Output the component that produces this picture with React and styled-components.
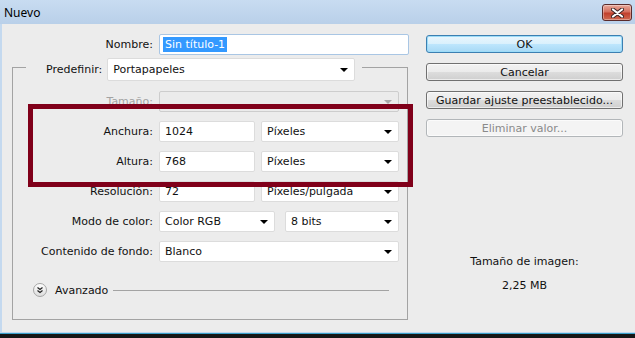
import React from 'react';
import styled, { createGlobalStyle } from 'styled-components';

const GlobalStyle = createGlobalStyle`
  html, body {
    margin: 0;
    padding: 0;
  }
  body {
    width: 635px;
    height: 338px;
    overflow: hidden;
    background: #161616;
    font-family: "DejaVu Sans", sans-serif;
    font-size: 11px;
    color: #111;
  }
`;

// --- Ventana ---

const Window = styled.div`
  position: relative;
  width: 635px;
  height: 333px;
  display: flex;
  flex-direction: column;
  background: #ececec;
`;

const TitleBar = styled.div`
  height: 24px;
  flex-shrink: 0;
  display: flex;
  align-items: center;
  justify-content: space-between;
  padding: 0 3px 0 4px;
  background: linear-gradient(#c8dcf1, #b9d0e9);
`;

const Title = styled.span`
  font-family: "Noto Sans", sans-serif;
  font-size: 12px;
  color: #000;
  margin-top: 1px;
`;

const CloseButton = styled.div`
  width: 30px;
  height: 17px;
  box-sizing: border-box;
  margin-top: 1px;
  display: flex;
  align-items: center;
  justify-content: center;
  border: 1px solid #5a2b2b;
  border-radius: 3px;
  background: linear-gradient(#e9a99b 0%, #d4705f 45%, #c1402d 55%, #cf6a52 100%);
  box-shadow: inset 0 0 0 1px rgba(255, 255, 255, 0.35);
`;

const Body = styled.div`
  flex: 1;
  display: flex;
  border-left: 2px solid #c4d9ef;
  border-bottom: 1px solid #c2d8ee;
`;

const Taskbar = styled.div`
  height: 4px;
  border-top: 1px solid #3aa0c9;
  background: #161616;
`;

// --- Panel izquierdo ---

const LeftPane = styled.div`
  width: 411px;
  box-sizing: border-box;
  padding: 10px 0 0 10px;
`;

const NameRow = styled.div`
  display: flex;
  align-items: center;
  gap: 6px;
  height: 21px;
`;

const Label = styled.span`
  width: ${({ $w }) => $w || 140}px;
  flex-shrink: 0;
  text-align: right;
  white-space: nowrap;
  color: ${({ $disabled }) => ($disabled ? '#a3a3a3' : '#111')};
`;

const TextInput = styled.div`
  width: ${({ $w }) => $w}px;
  height: 21px;
  box-sizing: border-box;
  display: flex;
  align-items: center;
  padding: 0 5px;
  background: #fff;
  border: 1px solid ${({ $focused }) => ($focused ? '#a9c6e4' : '#dcdcdc')};
  border-radius: 2px;
`;

const Selected = styled.span`
  background: #3399ff;
  color: #fff;
  padding: 1px 2px;
  margin-left: -2px;
`;

const GroupBox = styled.fieldset`
  width: 396px;
  box-sizing: border-box;
  margin: 3px 0 0 0;
  padding: 14px 0 22px 0;
  border: 1px solid #a3a3a3;
  border-radius: 0;
`;

const Legend = styled.legend`
  display: flex;
  align-items: flex-start;
  gap: 5px;
  height: 19px;
  margin-left: 13px;
  padding: 0 7px 0 20px;
`;

const LegendLabel = styled.span`
  line-height: 23px;
`;

const Rows = styled.div`
  display: flex;
  flex-direction: column;
  gap: 9px;
`;

const Row = styled.div`
  display: flex;
  align-items: center;
  gap: 6px;
  height: 21px;
`;

const DropBox = styled.div`
  width: ${({ $w }) => $w}px;
  height: ${({ $h }) => $h || 21}px;
  box-sizing: border-box;
  display: flex;
  align-items: center;
  justify-content: space-between;
  padding: 0 5px 0 5px;
  margin-left: ${({ $ml }) => $ml || 0}px;
  border: 1px solid ${({ $disabled }) => ($disabled ? '#cdcdcd' : '#dcdcdc')};
  border-radius: 2px;
  background: ${({ $disabled }) => ($disabled ? '#ebebeb' : '#fff')};
  flex-shrink: 0;
`;

const Arrow = styled.span`
  width: 0;
  height: 0;
  border-left: 4px solid transparent;
  border-right: 4px solid transparent;
  border-top: 4px solid ${({ $disabled }) => ($disabled ? '#a8a8a8' : '#000')};
  margin-right: 1px;
`;

const Dropdown = ({ value, w, h, ml, disabled }) => (
  <DropBox $w={w} $h={h} $ml={ml} $disabled={disabled}>
    <span>{value}</span>
    <Arrow $disabled={disabled} />
  </DropBox>
);

const AdvancedRow = styled.div`
  display: flex;
  align-items: center;
  height: 14px;
  margin: 21px 18px 0 20px;
  gap: 8px;
`;

const Rule = styled.div`
  flex: 1;
  height: 1px;
  margin-left: -3px;
  background: #a3a3a3;
`;

const Highlight = styled.div`
  position: absolute;
  left: 28px;
  top: 104px;
  width: 385px;
  height: 83px;
  box-sizing: border-box;
  border: 5px solid #80001a;
  pointer-events: none;
`;

// --- Panel derecho ---

const RightPane = styled.div`
  width: 197px;
  margin-left: 13px;
  padding-top: 11px;
  display: flex;
  flex-direction: column;
`;

const Buttons = styled.div`
  display: flex;
  flex-direction: column;
  gap: 10px;
`;

const Button = styled.div`
  height: 18px;
  box-sizing: border-box;
  display: flex;
  align-items: center;
  justify-content: center;
  border: 1px solid ${({ $variant }) =>
    $variant === 'default' ? '#3c7fb1' : $variant === 'disabled' ? '#b2b6b9' : '#707070'};
  border-radius: 3px;
  color: ${({ $variant }) => ($variant === 'disabled' ? '#8a8a8a' : '#111')};
  background: ${({ $variant }) =>
    $variant === 'disabled'
      ? '#f4f4f4'
      : $variant === 'default'
      ? 'linear-gradient(#eaf6fd 0%, #d9f0fc 50%, #bee6fd 50%, #a7d9f5 100%)'
      : 'linear-gradient(#f2f2f2 0%, #ebebeb 50%, #dddddd 50%, #cfcfcf 100%)'};
  box-shadow: ${({ $variant }) =>
    $variant === 'default' ? 'inset 0 0 0 1px #9cdcf8' : 'inset 0 0 0 1px rgba(255,255,255,0.6)'};
`;

const SizeInfo = styled.div`
  margin-top: 118px;
  display: flex;
  flex-direction: column;
  align-items: center;
  gap: 10px;
  line-height: 14px;
`;

const CloseGlyph = () => (
  <svg width="13" height="10" viewBox="0 0 13 10">
    <path d="M2 1.5 L11 8.5 M11 1.5 L2 8.5" stroke="#3a2424" strokeWidth="4" strokeLinecap="round" />
    <path d="M2 1.5 L11 8.5 M11 1.5 L2 8.5" stroke="#fff" strokeWidth="2.2" strokeLinecap="round" />
  </svg>
);

const AdvancedIcon = () => (
  <svg width="14" height="14" viewBox="0 0 14 14">
    <defs>
      <linearGradient id="adv" x1="0" y1="0" x2="0" y2="1">
        <stop offset="0" stopColor="#ffffff" />
        <stop offset="1" stopColor="#dcdcdc" />
      </linearGradient>
    </defs>
    <circle cx="7" cy="7" r="6.5" fill="url(#adv)" stroke="#a5a5a5" />
    <path d="M4.5 4.5 L7 6.5 L9.5 4.5 M4.5 7.5 L7 9.5 L9.5 7.5" fill="none" stroke="#222" strokeWidth="1.2" />
  </svg>
);

export default function App() {
  return (
    <>
      <GlobalStyle />
      <Window>
        <TitleBar>
          <Title>Nuevo</Title>
          <CloseButton>
            <CloseGlyph />
          </CloseButton>
        </TitleBar>
        <Body>
          <LeftPane>
            <NameRow>
              <Label $w={141}>Nombre:</Label>
              <TextInput $w={250} $focused>
                <Selected>Sin título-1</Selected>
              </TextInput>
            </NameRow>

            <GroupBox>
              <Legend>
                <LegendLabel>Predefinir:</LegendLabel>
                <Dropdown value="Portapapeles" w={248} h={23} />
              </Legend>
              <Rows>
                <Row>
                  <Label $disabled>Tamaño:</Label>
                  <Dropdown value="" w={240} disabled />
                </Row>
                <Row>
                  <Label>Anchura:</Label>
                  <TextInput $w={96}>1024</TextInput>
                  <Dropdown value="Píxeles" w={138} />
                </Row>
                <Row>
                  <Label>Altura:</Label>
                  <TextInput $w={96}>768</TextInput>
                  <Dropdown value="Píxeles" w={138} />
                </Row>
                <Row>
                  <Label>Resolución:</Label>
                  <TextInput $w={96}>72</TextInput>
                  <Dropdown value="Píxeles/pulgada" w={138} />
                </Row>
                <Row>
                  <Label>Modo de color:</Label>
                  <Dropdown value="Color RGB" w={116} />
                  <Dropdown value="8 bits" w={114} ml={4} />
                </Row>
                <Row>
                  <Label>Contenido de fondo:</Label>
                  <Dropdown value="Blanco" w={240} />
                </Row>
              </Rows>
              <AdvancedRow>
                <AdvancedIcon />
                <span>Avanzado</span>
                <Rule />
              </AdvancedRow>
            </GroupBox>
          </LeftPane>

          <RightPane>
            <Buttons>
              <Button $variant="default">OK</Button>
              <Button>Cancelar</Button>
              <Button>Guardar ajuste preestablecido...</Button>
              <Button $variant="disabled">Eliminar valor...</Button>
            </Buttons>
            <SizeInfo>
              <span>Tamaño de imagen:</span>
              <span>2,25 MB</span>
            </SizeInfo>
          </RightPane>
        </Body>
        <Highlight />
      </Window>
      <Taskbar />
    </>
  );
}
